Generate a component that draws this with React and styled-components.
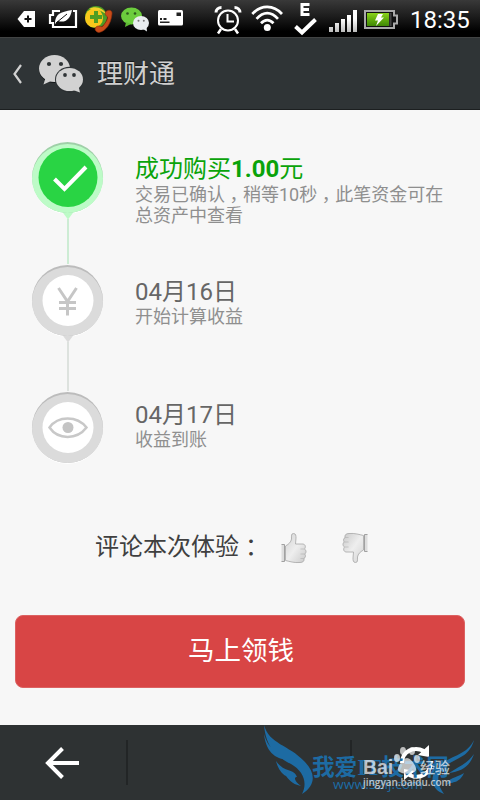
import React from 'react';
import styled, { createGlobalStyle } from 'styled-components';

const GlobalStyle = createGlobalStyle`
  * {
    box-sizing: border-box;
  }

  body {
    margin: 0;
    background: #f7f7f7;
    font-family: Roboto, "Noto Sans CJK SC", sans-serif;
  }
`;

const Page = styled.div`
  display: flex;
  flex-direction: column;
  width: 480px;
  height: 800px;
  overflow: hidden;
`;

const StatusBar = styled.div`
  display: flex;
  height: 38px;
  background: linear-gradient(#393939, #1c1c1c 45%, #000 85%);
  border-bottom: 1px solid #414343;
`;

const StatusIcon = styled.svg`
  display: block;
  flex: none;
  height: 37px;
  margin-left: ${({gap}) => gap || 0}px;
`;

const Clock = styled.span`
  margin-left: 11px;
  color: #fff;
  font-size: 24px;
  line-height: 40px;
`;

const Header = styled.header`
  display: flex;
  align-items: center;
  height: 72px;
  padding-left: 12px;
  background: #2f3436;
  border-bottom: 1px solid #1c1f20;
  color: #cfcfcf;

  h1 {
    margin: 0 0 0 13px;
    font-size: 26px;
    font-weight: 400;
    line-height: 70px;
    text-shadow: 0 -1px 0 #15181a;
  }
`;

const Logo = styled.svg`
  margin-left: 15px;
`;

const Content = styled.main`
  flex: 1;
  background: #f7f7f7;
`;

const Timeline = styled.section`
  display: flex;
  height: 398px;
  padding: 31px 0 0 31px;
`;

const Rail = styled.div`
  display: flex;
  flex-direction: column;
  width: 73px;

  svg {
    display: block;
    flex: none;
  }
`;

const Steps = styled.div`
  padding: 13px 0 0 31px;
`;

const Step = styled.div`
  height: 123px;

  h2 {
    margin: 0;
    font-size: 24px;
    font-weight: 400;
    line-height: 30px;
    color: ${({done}) => done ? '#0aa30a' : '#666'};
  }

  p {
    width: 312px;
    margin: -1px 0 0;
    font-size: 18px;
    line-height: 21px;
    color: #8f8f8f;
  }
`;

// full-width punctuation drawn in the middle of its cell
const Mark = styled.span`
  display: inline-block;
  width: 1em;
  text-align: center;
  font-family: "Noto Sans CJK SC", sans-serif;
  font-feature-settings: "halt";
`;

const Feedback = styled.div`
  display: flex;
  align-items: center;
  height: 80px;
  padding-left: 95px;
  font-size: 24px;
  color: #404040;

  svg {
    display: block;
    margin-top: -1px;
  }
`;

const Question = styled.span`
  width: 185px;
  padding-bottom: 5px;
  line-height: 30px;
  white-space: nowrap;
`;

const Thumb = styled.svg`
  margin-right: 33px;
  transform: ${({down}) => down ? 'rotate(180deg)' : 'none'};
`;

const ClaimButton = styled.button`
  display: block;
  width: 450px;
  height: 73px;
  margin: 27px 15px 0;
  padding: 0 0 6px 2px;
  border: 1px solid #dc6262;
  border-radius: 8px;
  background: #d84545;
  color: #fff;
  font-family: inherit;
  font-size: 26.5px;
`;

const BottomBar = styled.footer`
  position: relative;
  display: flex;
  align-items: center;
  height: 75px;
  background: #2e3233;
`;

const BarCell = styled.div`
  display: flex;
  flex: ${({wide}) => wide ? '1' : '0 0 128px'};
  justify-content: center;
  align-items: center;
  height: 45px;
  border-right: ${({last}) => last ? 'none' : '2px solid #222526'};
`;

const Watermark = styled.svg`
  position: absolute;
  left: 250px;
  top: 0;
`;

const StatusIcons = () => <>
  <StatusIcon width="20" viewBox="17 0 20 37" gap={17}>
    <path d="M17.5 19L24 11H35V27H24Z" fill="#fff"/>
    <path d="M24.5 19h7M28 15.5v7" stroke="#111" strokeWidth="2"/>
  </StatusIcon>
  <StatusIcon width="30" viewBox="48 0 30 37" gap={11}>
    <path d="M60 11H53V15H50V23H53V27H76V11H73" fill="none" stroke="#fff" strokeWidth="2.2"/>
    <path d="M55 24C55 14 60 12 72 10C70 20 65 23 58 21L54 25Z" fill="#fff"/>
    <path d="M56 23L67 14" stroke="#111" strokeWidth="1"/>
  </StatusIcon>
  <StatusIcon width="30" viewBox="84 0 30 37" gap={6}>
    <circle cx="96" cy="17" r="11" fill="#4b9c27"/>
    <ellipse cx="94" cy="18" rx="9" ry="9.5" fill="#f8c81c"/>
    <path d="M89 9C96 5 104 9 106 14L101 11Z" fill="#f2d12a"/>
    <path d="M90 17h12M96 11v12" stroke="#4f9d23" strokeWidth="4"/>
    <path d="M106.5 11C110 9 112.500 11 112 14C111 24 106 31 99 32.500C95.500 32 94 29 96 27C99 24.500 101 28 103 26C106 22 108 19 107.500 17C105 15 104.500 13 106.500 11Z" fill="#c94c19" stroke="#8e2d0b" strokeWidth=".6"/>
  </StatusIcon>
  <StatusIcon width="30" viewBox="120 0 30 37" gap={6}>
    <ellipse cx="131.5" cy="16" rx="10.500" ry="8.500" fill="#6ccd3d"/>
    <path d="M126 22L125 27L131 24Z" fill="#5fbb35"/>
    <ellipse cx="141" cy="23" rx="8" ry="7" fill="#e9edf0"/>
    <path d="M143 29L147 31.500L146.500 27Z" fill="#e9edf0"/>
    <g fill="#2c5a1c">
      <circle cx="127.500" cy="13.500" r="1.300"/>
      <circle cx="135" cy="13.500" r="1.300"/>
    </g>
    <g fill="#777">
      <circle cx="138.500" cy="20.800" r="1"/>
      <circle cx="143.800" cy="20.800" r="1"/>
    </g>
  </StatusIcon>
  <StatusIcon width="26" viewBox="158 0 26 37" gap={8}>
    <rect x="158" y="10" width="25" height="15.500" rx="1.500" fill="#fff"/>
    <path d="M176.500 12.500h4.500v3.500h-4.500zM160 18h2v2h-2zM163.500 18h3v2h-3zM160 21.500h9.500v1.500h-9.500z" fill="#222"/>
  </StatusIcon>
  <StatusIcon width="28" viewBox="214 0 28 37" gap={30}>
    <g fill="none" stroke="#fff" strokeWidth="2">
      <circle cx="228" cy="20.500" r="10"/>
      <path d="M227.500 14V21.500H234"/>
      <path d="M221 29L218 33.500M235 29L238 33.500" strokeWidth="2.500"/>
      <path d="M216 12.500C216 9.500 218.500 7.500 221.500 7.500M240 12.500C240 9.500 237.500 7.500 234.500 7.500" strokeWidth="3"/>
    </g>
  </StatusIcon>
  <StatusIcon width="34" viewBox="250 0 34 37" gap={8}>
    <g fill="none" stroke="#fff" strokeWidth="2.700">
      <path d="M252.300 14C261 4.500 273.500 4.500 282 14"/>
      <path d="M256.500 18.800C263.500 11.300 271 11.300 278 18.800"/>
      <path d="M261 23.200C265 19 269.500 19 273.500 23.200"/>
    </g>
    <circle cx="267.300" cy="27.500" r="3.500" fill="#fff"/>
  </StatusIcon>
  <StatusIcon width="26" viewBox="293 0 26 37" gap={9}>
    <path d="M309.500 4.500H302V14.500H309.500M302 9.500H309" fill="none" stroke="#fff" strokeWidth="3"/>
    <path d="M295.500 26.500L302 32.500L315.500 19.500" fill="none" stroke="#fff" strokeWidth="4"/>
  </StatusIcon>
  <StatusIcon width="30" viewBox="328 0 30 37" gap={9}>
    <defs>
      <linearGradient id="bars" x2="0" y2="1">
        <stop offset=".4" stopColor="#fff"/>
        <stop offset="1" stopColor="#bbb"/>
      </linearGradient>
    </defs>
    <path d="M329 27h4v5h-4zM335 23h4v9h-4zM341 19h4v13h-4zM347 15h4v17h-4zM353 10h4v22h-4z" fill="url(#bars)"/>
  </StatusIcon>
  <StatusIcon width="36" viewBox="363 0 36 37" gap={5}>
    <defs>
      <linearGradient id="charge" x2="0" y2="1">
        <stop offset="0" stopColor="#8bd31d"/>
        <stop offset=".5" stopColor="#62ad0d"/>
        <stop offset="1" stopColor="#408807"/>
      </linearGradient>
    </defs>
    <path d="M365 11H394V15.500H397V23.500H394V28H365Z" fill="#111" stroke="#aaa" strokeWidth="2"/>
    <rect x="367" y="13" width="22" height="13" fill="url(#charge)"/>
    <path d="M390.500 13V26" stroke="#444" strokeWidth="2"/>
    <path d="M378 14H383L381 17.500H384L376 26L378 20.500H375Z" fill="#fff"/>
  </StatusIcon>
</>;

const WeChatLogo = () => <Logo width="46" height="40" viewBox="38 54 46 40">
  <g fill="#15181a" transform="translate(0 1)">
    <ellipse cx="54.500" cy="68.500" rx="15.500" ry="13.500"/>
    <ellipse cx="69.500" cy="79.500" rx="13.500" ry="11.700"/>
  </g>
  <g fill="#d2d2d2">
    <ellipse cx="54.500" cy="68.500" rx="15.500" ry="13.500"/>
    <path d="M45.500 78L43.500 84.500L51 81Z"/>
  </g>
  <ellipse cx="69.500" cy="79.500" rx="14.500" ry="12.700" fill="#2f3436"/>
  <ellipse cx="69.500" cy="79.500" rx="13.500" ry="11.500" fill="#d2d2d2"/>
  <path d="M73 90L80 92.500L78.500 86Z" fill="#d2d2d2"/>
  <g fill="#2f3436">
    <circle cx="49" cy="64" r="2.100"/>
    <circle cx="61" cy="64" r="2.100"/>
    <circle cx="65" cy="75" r="1.900"/>
    <circle cx="74" cy="75" r="1.900"/>
  </g>
</Logo>;

const Node = ({height, ring, edge, fill, radius, line, last, children}) =>
  <svg width="73" height={height} viewBox={`0 0 73 ${height}`}>
    {!last && <path d={`M37 78V${height + 2}`} stroke={line} strokeWidth="1.500"/>}
    <circle cx="36.500" cy="37.500" r="35.500" fill="#fff"/>
    {!last && <path d="M31 70.500H43L37 78.500Z" fill={ring}/>}
    <circle cx="36.500" cy="36.500" r="35.500" fill={edge}/>
    <path d="M1 37.500A35.500 34.500 0 0 1 72 37.500A35.500 34.500 0 0 1 1 37.500Z" fill={ring}/>
    <circle cx="37" cy="36.500" r={radius} fill={fill}/>
    {children}
  </svg>;

const Hand = ({down}) => <Thumb down={down} width="28" height="32" viewBox="280 532 28 32">
  <defs>
    <linearGradient id="skin" x1="0" x2="1" y2="1">
      <stop offset="0" stopColor="#d2d2d2"/>
      <stop offset=".5" stopColor="#eee"/>
      <stop offset="1" stopColor="#c9c9c9"/>
    </linearGradient>
  </defs>
  <path d="M285.500 546C289 544 291 542 291.500 539C291.500 536 291 533.500 293.500 533.500C296 533.500 296 536 296 538L295.500 544H303C305.500 544.500 306 547 304.500 549C306.500 550.500 306.500 552.500 304.800 554C306 556 305.500 557.500 304 558.500C304.500 561 303 562.500 300 562.500C294 563 290 561.500 285.500 560.500Z" fill="url(#skin)" stroke="#a6a6a6" strokeWidth=".8"/>
  <path d="M300.500 549H304M300.500 554H304.500M300.500 558.500H304" stroke="#b5b5b5" strokeWidth=".7"/>
  <path d="M281.500 544.500H284.500V561.500H281.500" fill="#ddd" stroke="#999" strokeWidth=".9"/>
</Thumb>;

const wing = 'M14 0C19 19 39 20 54 36C66 48 66 60 52 69C58 57 53 46 41 39C27 32 16 23 14 0Z' +
  'M14 9C18 23 26 29 40 35C28 35 16 29 14 9Z' +
  'M26 36C34 48 44 43 47 52C43 52 45 57 51 61C41 59 38 53 36 51C32 49 28 44 26 36Z';

const Watermarks = () => <Watermark width="230" height="75" viewBox="0 0 230 75">
  <g fill="#1d6ba3">
    <path d={wing}/>
    <path d="M224 15C220 30 210 32 200 38C185 46 186 58 194 69C180 64 179 50 190 40C202 30 217 30 224 15Z"/>
    <path d="M224 29C219 43 211 46 199 48C208 42 217 39 224 29ZM214 48C209 59 203 56 197 60C197 53 206 53 214 48Z"/>
    <text x="62" y="50" fontFamily="Liberation Serif, Noto Sans CJK SC, serif" fontSize="23" fontWeight="700" textLength="137" lengthAdjust="spacingAndGlyphs">我爱IT技术网</text>
    <text x="83" y="64" fontFamily="Open Sans, sans-serif" fontSize="13" fontWeight="500" textLength="90" lengthAdjust="spacingAndGlyphs">www.52ij.com</text>
  </g>
  <g fill="#fff" opacity=".68" fontFamily="Open Sans, Noto Sans CJK SC, sans-serif">
    <text x="113" y="49" fontFamily="Liberation Sans, sans-serif" fontWeight="700" fontSize="20" textLength="30" lengthAdjust="spacingAndGlyphs">Bai</text>
    <ellipse cx="147" cy="33" rx="3" ry="4"/>
    <ellipse cx="153" cy="26" rx="3" ry="4"/>
    <ellipse cx="162" cy="26" rx="3" ry="4"/>
    <ellipse cx="167" cy="34" rx="3" ry="4"/>
    <path d="M157 33C161 33 167 42 166 45C164 50 150 50 148 45C147 42 153 33 157 33Z"/>
    <text x="170" y="48" fontSize="15" fontWeight="500">经验</text>
    <text x="113" y="61" fontSize="10" fontWeight="600" textLength="88" lengthAdjust="spacingAndGlyphs">jingyan.baidu.com</text>
  </g>
</Watermark>;

const App = () => {
  return <Page>
    <GlobalStyle/>
    <StatusBar>
      <StatusIcons/>
      <Clock>18:35</Clock>
    </StatusBar>

    <Header>
      <svg width="11" height="20" viewBox="0 0 11 20">
        <path d="M9 1L2.500 10L9 19" fill="none" stroke="#d2d2d2" strokeWidth="2.200"/>
      </svg>
      <WeChatLogo/>
      <h1>理财通</h1>
    </Header>

    <Content>
      <Timeline>
        <Rail>
          <Node height={123} ring="#bdfbc7" edge="#9fd0a8" fill="#29d444" radius={29.5} line="#bfe8c8">
            <path d="M23.500 38L33.500 48L55 26" fill="none" stroke="#fff" strokeWidth="4"/>
          </Node>
          <Node height={127} ring="#dbdbdb" edge="#bcbcbc" fill="#fff" radius={25.5} line="#d5dbd6">
            <path d="M27.500 24L36.500 37.500L45.500 24M36.500 37V51.500M28 38.500H45M28 44.500H45" fill="none" stroke="#c6c6c6" strokeWidth="3"/>
          </Node>
          <Node height={74} ring="#dbdbdb" edge="#bcbcbc" fill="#fff" radius={25.5} last>
            <path d="M18.500 36.500C27 24.500 46 24.500 55.500 36.500C46 49 27 49 18.500 36.500Z" fill="none" stroke="#c8c8c8" strokeWidth="2.500"/>
            <circle cx="37" cy="36.500" r="5.500" fill="#c4c4c4"/>
          </Node>
        </Rail>
        <Steps>
          <Step done>
            <h2>成功购买<b>1.00</b>元</h2>
            <p>交易已确认<Mark>，</Mark>稍等10秒<Mark>，</Mark>此笔资金可在总资产中查看</p>
          </Step>
          <Step>
            <h2>04月16日</h2>
            <p>开始计算收益</p>
          </Step>
          <Step>
            <h2>04月17日</h2>
            <p>收益到账</p>
          </Step>
        </Steps>
      </Timeline>

      <Feedback>
        <Question>评论本次体验<Mark>：</Mark></Question>
        <Hand/>
        <Hand down/>
      </Feedback>

      <ClaimButton>马上领钱</ClaimButton>
    </Content>

    <BottomBar>
      <BarCell>
        <svg width="36" height="34" viewBox="46 746 36 34">
          <path d="M80 763H50M63.500 748.500L49 763L63.500 777.500" fill="none" stroke="#fff" strokeWidth="4"/>
        </svg>
      </BarCell>
      <BarCell wide/>
      <BarCell last>
        <svg width="36" height="38" viewBox="398 744 36 38">
          <path d="M402 763C402 751 414 746 424 751M431 761C431 774 420 780 409 775" fill="none" stroke="#fff" strokeWidth="4"/>
          <path d="M429 745V757L418 755ZM404 780L404 769L415 771Z" fill="#fff"/>
        </svg>
      </BarCell>
      <Watermarks/>
    </BottomBar>
  </Page>;
};

export default App;
